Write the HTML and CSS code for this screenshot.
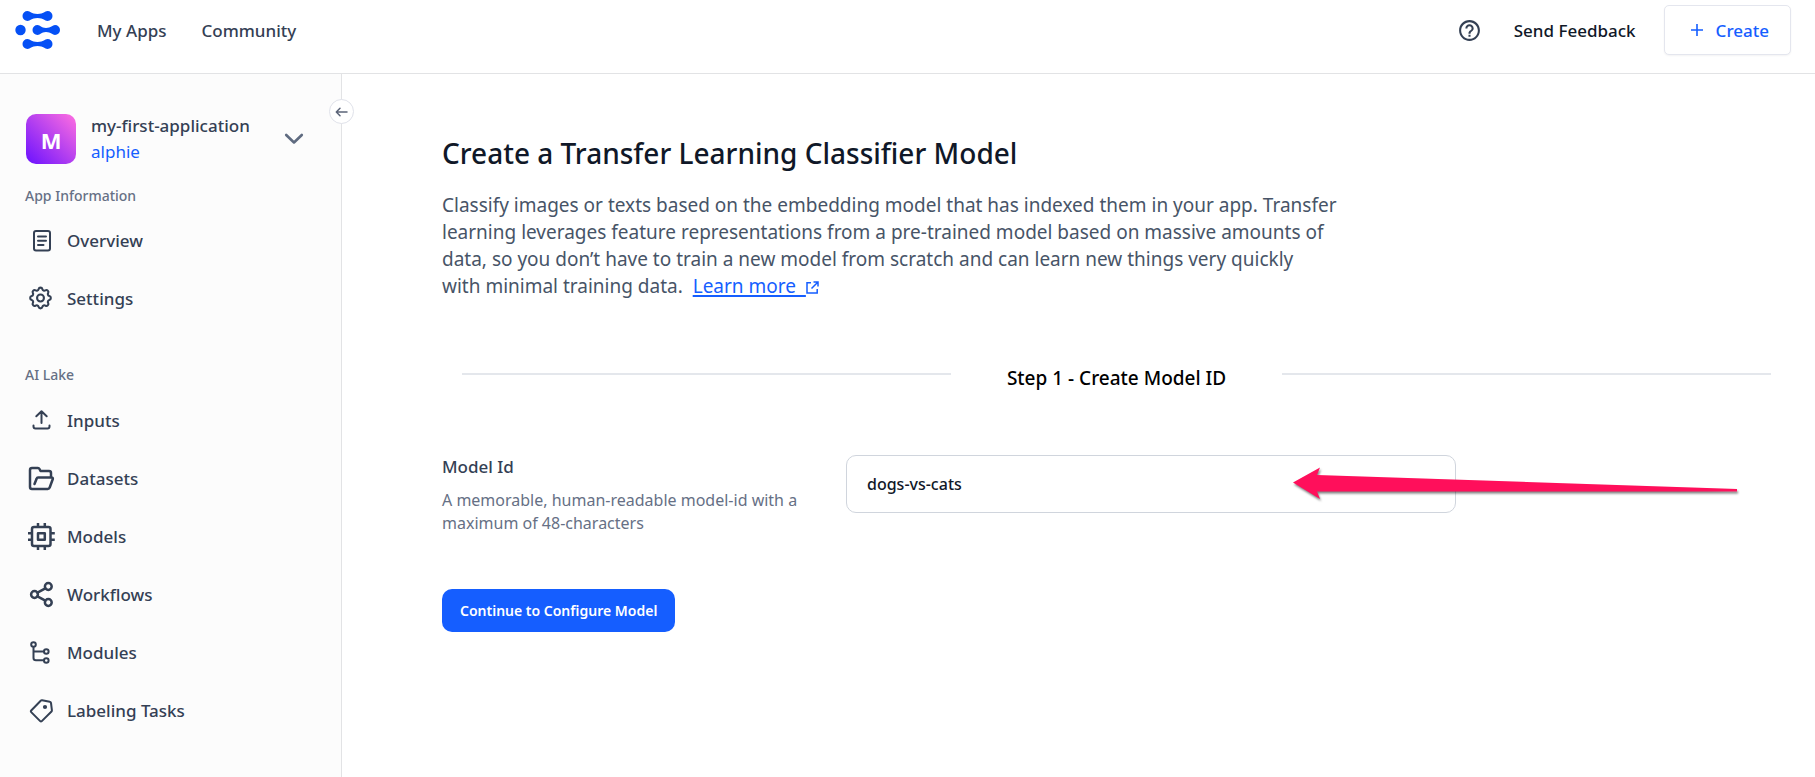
FILE: index.html
```html
<!DOCTYPE html>
<html lang="en">
<head>
<meta charset="utf-8">
<title>Create a Transfer Learning Classifier Model</title>
<link rel="stylesheet" href="styles.css">
</head>
<body>
<header class="topbar">
  <a class="logo" href="#" aria-label="Home">
    <svg width="46" height="40" viewBox="0 0 46 40" fill="#0550f5">
      <circle cx="5.500" cy="20" r="5.200"/>
      <path id="link" d="M12.500 1C15.500 1 16 4 22.500 4S29.500 1 32.500 1a5 5 0 0 1 0 10C29.500 11 29 8 22.500 8S15.500 11 12.500 11a5 5 0 0 1 0-10z"/>
      <path d="M22.500 15C25.500 15 26 18 31 18S37.500 15 40 15a5 5 0 0 1 0 10C37.500 25 36 22 31 22S25.500 25 22.500 25a5 5 0 0 1 0-10z"/>
      <use href="#link" y="28"/>
    </svg>
  </a>
  <nav class="topnav">
    <a href="#">My Apps</a>
    <a href="#">Community</a>
  </nav>
  <div class="actions">
    <button class="icon-button" aria-label="Help">
      <svg width="25" height="25" viewBox="0 0 24 24" fill="#344054"><path d="M11 18h2v-2h-2v2zm1-16C6.480 2 2 6.480 2 12s4.480 10 10 10 10-4.480 10-10S17.520 2 12 2zm0 18c-4.410 0-8-3.590-8-8s3.590-8 8-8 8 3.590 8 8-3.590 8-8 8zm0-14c-2.210 0-4 1.790-4 4h2c0-1.100.9-2 2-2s2 .9 2 2c0 2-3 1.750-3 5h2c0-2.250 3-2.500 3-5 0-2.210-1.790-4-4-4z"/></svg>
    </button>
    <a class="feedback" href="#">Send Feedback</a>
    <button class="create">
      <svg width="14" height="14" viewBox="0 0 14 14" stroke="#155eff" stroke-width="1.600"><path d="M7 1v12M1 7h12"/></svg>
      <span class="create-text">Create</span>
    </button>
  </div>
</header>
<div class="shell">
  <aside class="sidebar">
    <button class="collapse" aria-label="Collapse sidebar">
      <svg width="13" height="12" viewBox="0 0 13 12" fill="none" stroke="#5b6478" stroke-width="1.500" stroke-linecap="round" stroke-linejoin="round"><path d="M12 6H1.500M5 2.300L1.300 6 5 9.700"/></svg>
    </button>
    <div class="app">
      <span class="avatar">M</span>
      <div class="app-text">
        <span class="app-name">my-first-application</span>
        <a class="owner" href="#">alphie</a>
      </div>
      <button class="icon-button" aria-label="Switch application">
        <svg width="20" height="12" viewBox="0 0 20 12" fill="none" stroke="#5f6b80" stroke-width="2.600" stroke-linecap="round" stroke-linejoin="round"><path d="M2.200 2L10 9.500 17.800 2"/></svg>
      </button>
    </div>
    <h2 class="group">App Information</h2>
    <nav class="menu">
      <a href="#"><svg class="ico" viewBox="0 0 28 28"><rect x="7" y="4" width="16" height="19.500" rx="2"/><path d="M11 9.500h8M11 13.800h8M11 18h5.500"/></svg>Overview</a>
      <a href="#"><svg class="ico" viewBox="0 0 28 28"><g transform="translate(-.3 -.8) scale(1.150)" stroke-width="1.800"><path d="M10.325 4.317c.426-1.756 2.924-1.756 3.350 0a1.724 1.724 0 0 0 2.573 1.066c1.543-.94 3.310.826 2.370 2.370a1.724 1.724 0 0 0 1.065 2.572c1.756.426 1.756 2.924 0 3.350a1.724 1.724 0 0 0-1.066 2.573c.94 1.543-.826 3.310-2.370 2.370a1.724 1.724 0 0 0-2.572 1.065c-.426 1.756-2.924 1.756-3.350 0a1.724 1.724 0 0 0-2.573-1.066c-1.543.94-3.310-.826-2.370-2.370a1.724 1.724 0 0 0-1.065-2.572c-1.756-.426-1.756-2.924 0-3.350a1.724 1.724 0 0 0 1.066-2.573c-.94-1.543.826-3.310 2.370-2.370.996.608 2.296.070 2.572-1.065z"/><circle cx="12" cy="12" r="3"/></g></svg>Settings</a>
    </nav>
    <h2 class="group">AI Lake</h2>
    <nav class="menu">
      <a href="#"><svg class="ico" viewBox="0 0 28 28"><path d="M14.500 16V4.500M9.300 9.300l5.200-5 5.200 5M6.500 18.500v1c0 1.300.8 2 2 2h12c1.200 0 2-.7 2-2v-1"/></svg>Inputs</a>
      <a href="#"><svg class="ico bold" viewBox="0 0 28 28"><path d="M24 12.500V8c0-1.200-.8-2-2-2h-8.500l-1-2c-.4-.8-.8-1-1.600-1H5c-1.200 0-2 .8-2 2v17c0 1.200.8 2 2 2h15.700c.9 0 1.600-.4 1.900-1.300l3.200-8.700c.2-.8-.2-1.500-1-1.500H11c-.6 0-1.100.3-1.300 1L7.500 19"/></svg>Datasets</a>
      <a href="#"><svg class="ico bold" viewBox="0 0 28 28"><rect x="5" y="4" width="18.500" height="19" rx="2"/><rect x="11" y="10.300" width="6.800" height="6.500"/><path stroke-linecap="butt" d="M11 0v3.500M17.800 0v3.500M11 23.500V27M17.800 23.500V27M1 10.200h3.500M1 16.800h3.500M24 10.200h3.800M24 16.800h3.800"/></svg>Models</a>
      <a href="#"><svg class="ico bold" viewBox="0 0 28 28"><circle cx="7.500" cy="13.500" r="3.400"/><circle cx="21.300" cy="5.500" r="3.400"/><circle cx="21.300" cy="21.500" r="3.400"/><path d="M10.500 11.700l7.800-4.400M10.500 15.300l7.800 4.400"/></svg>Workflows</a>
      <a href="#"><svg class="ico" viewBox="0 0 28 28"><circle cx="6.500" cy="5.500" r="2.300"/><circle cx="19.300" cy="12.500" r="2.300"/><circle cx="19.300" cy="21.500" r="2.300"/><path d="M6.500 8v11c0 1.500 1 2.300 2.500 2.300h8M6.500 12.500H17"/></svg>Modules</a>
      <a href="#"><svg class="ico" viewBox="0 0 28 28"><path d="M13.700 3.700L4.200 13.500c-.5.500-.5 1.100 0 1.600l9 9c.5.500 1.100.5 1.600 0L24.500 14.500c.4-.4.500-.8.400-1.400L24 6c-.1-.7-.5-1.100-1.200-1.200l-7.700-1.500c-.6-.1-1 0-1.400.4z"/><circle cx="18" cy="10" r="1.100"/></svg>Labeling Tasks</a>
    </nav>
  </aside>
  <main class="content">
    <h1 class="title">Create a Transfer Learning Classifier Model</h1>
    <p class="intro">Classify images or texts based on the embedding model that has indexed them in your app. Transfer<br>
      learning leverages feature representations from a pre-trained model based on massive amounts of<br>
      data, so you don’t have to train a new model from scratch and can learn new things very quickly<br>
      with minimal training data.&nbsp; <a class="learn" href="#">Learn more&nbsp; <svg width="13" height="13" viewBox="0 0 13 13" fill="none" stroke="#155eff" stroke-width="1.500"><path d="M5 1.800H1v10.200h10.200V8M7.500 1H12v4.500M12 1L5.500 7.500"/></svg></a></p>
    <div class="step"><span class="step-name">Step 1 - Create Model ID</span></div>
    <form class="model-form">
      <div class="field">
        <div class="field-text">
          <label class="label" for="model-id">Model Id</label>
          <p class="hint" id="hint">A memorable, human-readable model-id with a maximum of 48-characters</p>
        </div>
        <input class="input" id="model-id" type="text" value="dogs-vs-cats" aria-describedby="hint">
        <svg class="arrow" width="448" height="40" viewBox="0 0 448 40"><path d="M1 19.500L28 4.500 25 12 445 26v2.500L25 28.500 28 36z" fill="#ff0f5b"/></svg>
      </div>
      <button class="submit" type="button">Continue to Configure Model</button>
    </form>
  </main>
</div>
</body>
</html>
```
FILE: styles.css
```css
* { box-sizing: border-box; }
body {
  margin: 0;
  min-height: 100vh;
  display: flex;
  flex-direction: column;
  font-family: "Noto Sans", "Open Sans", sans-serif;
  font-size: 17px;
  font-weight: 500;
  line-height: 24px;
  color: #344054;
  background: #fff;
}
h1, h2, p { margin: 0; }
a { color: inherit; text-decoration: none; }
button { font: inherit; cursor: pointer; }
svg { display: block; flex: none; }

.topbar {
  display: flex;
  align-items: center;
  padding: 5px 24px 18px 15px;
  border-bottom: 1px solid #e2e3e5;
}
.topnav { display: flex; gap: 35px; margin-left: 36px; }
.topnav a, .feedback, .create-text { padding-top: 2px; }
.actions { display: flex; align-items: center; margin-left: auto; }
.icon-button { padding: 0; border: 0; background: none; }
.feedback { margin: 0 28px 0 32px; color: #101828; }
.create {
  display: flex;
  align-items: center;
  gap: 12px;
  height: 50px;
  padding: 0 21px 0 25px;
  border: 1px solid #e4e6ee;
  border-radius: 5px;
  background: #fff;
  box-shadow: 0 1px 2px rgba(16, 24, 40, 0.05);
  color: #155eff;
}

.shell { display: flex; flex: 1; }
.sidebar {
  position: relative;
  flex: none;
  width: 342px;
  padding: 40px 37px 0 25px;
  border-right: 1px solid #e2e3e5;
  background: #fcfcfc;
}
.collapse {
  position: absolute;
  top: 25px;
  right: -13px;
  display: grid;
  place-items: center;
  width: 25px;
  height: 25px;
  padding: 0;
  border: 1px solid #e0e2ea;
  border-radius: 50%;
  background: #fff;
}
.app { display: flex; align-items: center; gap: 15px; padding-left: 1px; }
.avatar {
  display: grid;
  place-items: center;
  width: 50px;
  height: 50px;
  padding-top: 2px;
  border-radius: 10px;
  background: linear-gradient(45deg, #6a11ff, #ff6fe0);
  color: #fff;
  font-size: 22px;
  font-weight: 700;
}
.app-text { display: flex; flex-direction: column; gap: 2px; flex: 1; }
.owner { color: #155eff; font-weight: 400; }
.group {
  margin-top: 20px;
  color: #667085;
  font-size: 14px;
  font-weight: 500;
  line-height: 24px;
}
.menu { display: flex; flex-direction: column; padding-top: 4px; }
.menu a {
  display: flex;
  align-items: center;
  gap: 12px;
  height: 58px;
  padding-left: 2px;
}
.menu + .group { margin-top: 35px; }
.group + .menu:last-child { padding-top: 5px; }
.ico {
  width: 28px;
  height: 28px;
  fill: none;
  stroke: #344054;
  stroke-width: 2;
  stroke-linecap: round;
  stroke-linejoin: round;
}
.bold { stroke-width: 2.500; }

.content { flex: 1; padding: 59px 24px 40px 100px; }
.title { color: #101828; font-size: 28px; font-weight: 500; line-height: 40px; }
.intro {
  margin-top: 19px;
  color: #475467;
  font-size: 19px;
  font-weight: 400;
  line-height: 27px;
}
.learn { color: #155eff; text-decoration: underline; text-decoration-thickness: 2px; text-underline-offset: 2px; }
.learn svg { display: inline-block; vertical-align: -1px; }
.step {
  display: flex;
  align-items: center;
  gap: 56px;
  margin-top: 66px;
  padding: 0 20px;
}
.step::before, .step::after {
  content: "";
  flex: 1;
  height: 2px;
  margin-bottom: 8px;
  background: #e4e7ec;
}
.step-name { color: #000; font-size: 19px; }
.model-form { margin-top: 65px; }
.field {
  position: relative;
  display: grid;
  grid-template-columns: 404fr 610fr 335fr;
  align-items: start;
}
.field-text { padding-right: 24px; }
.label { display: block; }
.hint { margin-top: 10px; color: #667085; font-size: 16px; font-weight: 400; line-height: 23px; }
.input {
  width: 100%;
  height: 58px;
  padding: 0 20px;
  border: 1px solid #d0d5dd;
  border-radius: 10px;
  background: #fff;
  color: #101828;
  font: inherit;
  font-size: 16px;
}
.arrow {
  position: absolute;
  top: 8px;
  right: 51px;
  overflow: visible;
  filter: drop-shadow(1px 2px 1px rgba(0, 0, 0, 0.5));
}
.submit {
  margin-top: 54px;
  height: 43px;
  padding: 0 18px;
  border: 0;
  border-radius: 10px;
  background: #155eff;
  color: #fff;
  font-size: 14px;
  font-weight: 600;
}
```
